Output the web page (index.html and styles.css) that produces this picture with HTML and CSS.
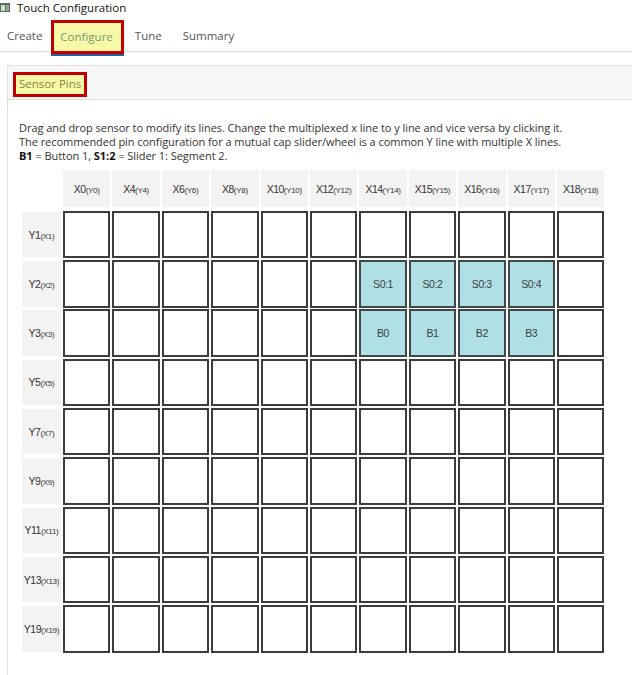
FILE: index.html
```html
<!DOCTYPE html>
<html>
<head>
<meta charset="utf-8">
<link rel="stylesheet" href="styles.css">
</head>
<body>
<div class="titlebar">
  <svg class="appicon" width="11" height="11" viewBox="0 0 11 11"><rect x="0" y="1" width="10" height="9" fill="#5a6b5f"/><rect x="1" y="3" width="4" height="6" fill="#cfe3d4"/><rect x="6" y="3" width="3" height="6" fill="#8fa596"/></svg>
  <span class="title">Touch Configuration</span>
</div>
<div class="tabs">
  <span class="tab">Create</span>
  <span class="tab active"><span class="hl">Configure</span></span>
  <span class="tab">Tune</span>
  <span class="tab">Summary</span>
</div>
<div class="panel">
  <div class="panel-head"><span class="hl-box">Sensor Pins</span></div>
  <div class="panel-body">
    <p class="desc">Drag and drop sensor to modify its lines. Change the multiplexed x line to y line and vice versa by clicking it.<br>The recommended pin configuration for a mutual cap slider/wheel is a common Y line with multiple X lines.<br><b>B1</b> = Button 1, <b>S1:2</b> = Slider 1: Segment 2.</p>
    <div class="grid">
      <div class="corner"></div>
      <div class="colh">X0<small>(Y0)</small></div>
      <div class="colh">X4<small>(Y4)</small></div>
      <div class="colh">X6<small>(Y6)</small></div>
      <div class="colh">X8<small>(Y8)</small></div>
      <div class="colh">X10<small>(Y10)</small></div>
      <div class="colh">X12<small>(Y12)</small></div>
      <div class="colh">X14<small>(Y14)</small></div>
      <div class="colh">X15<small>(Y15)</small></div>
      <div class="colh">X16<small>(Y16)</small></div>
      <div class="colh">X17<small>(Y17)</small></div>
      <div class="colh">X18<small>(Y18)</small></div>

      <div class="rowh">Y1<small>(X1)</small></div>
      <div class="cell"></div><div class="cell"></div><div class="cell"></div><div class="cell"></div><div class="cell"></div><div class="cell"></div><div class="cell"></div><div class="cell"></div><div class="cell"></div><div class="cell"></div><div class="cell"></div>

      <div class="rowh">Y2<small>(X2)</small></div>
      <div class="cell"></div><div class="cell"></div><div class="cell"></div><div class="cell"></div><div class="cell"></div><div class="cell"></div><div class="cell on">S0:1</div><div class="cell on">S0:2</div><div class="cell on">S0:3</div><div class="cell on">S0:4</div><div class="cell"></div>

      <div class="rowh">Y3<small>(X3)</small></div>
      <div class="cell"></div><div class="cell"></div><div class="cell"></div><div class="cell"></div><div class="cell"></div><div class="cell"></div><div class="cell on">B0</div><div class="cell on">B1</div><div class="cell on">B2</div><div class="cell on">B3</div><div class="cell"></div>

      <div class="rowh">Y5<small>(X5)</small></div>
      <div class="cell"></div><div class="cell"></div><div class="cell"></div><div class="cell"></div><div class="cell"></div><div class="cell"></div><div class="cell"></div><div class="cell"></div><div class="cell"></div><div class="cell"></div><div class="cell"></div>

      <div class="rowh">Y7<small>(X7)</small></div>
      <div class="cell"></div><div class="cell"></div><div class="cell"></div><div class="cell"></div><div class="cell"></div><div class="cell"></div><div class="cell"></div><div class="cell"></div><div class="cell"></div><div class="cell"></div><div class="cell"></div>

      <div class="rowh">Y9<small>(X9)</small></div>
      <div class="cell"></div><div class="cell"></div><div class="cell"></div><div class="cell"></div><div class="cell"></div><div class="cell"></div><div class="cell"></div><div class="cell"></div><div class="cell"></div><div class="cell"></div><div class="cell"></div>

      <div class="rowh">Y11<small>(X11)</small></div>
      <div class="cell"></div><div class="cell"></div><div class="cell"></div><div class="cell"></div><div class="cell"></div><div class="cell"></div><div class="cell"></div><div class="cell"></div><div class="cell"></div><div class="cell"></div><div class="cell"></div>

      <div class="rowh">Y13<small>(X13)</small></div>
      <div class="cell"></div><div class="cell"></div><div class="cell"></div><div class="cell"></div><div class="cell"></div><div class="cell"></div><div class="cell"></div><div class="cell"></div><div class="cell"></div><div class="cell"></div><div class="cell"></div>

      <div class="rowh">Y19<small>(X19)</small></div>
      <div class="cell"></div><div class="cell"></div><div class="cell"></div><div class="cell"></div><div class="cell"></div><div class="cell"></div><div class="cell"></div><div class="cell"></div><div class="cell"></div><div class="cell"></div><div class="cell"></div>
    </div>
  </div>
</div>
</body>
</html>
```
FILE: styles.css
```css
html, body {
  margin: 0;
  padding: 0;
  overflow: hidden;
  background: #fff;
}
body {
  font-family: "Open Sans", "Noto Sans", sans-serif;
  color: #222;
  width: 632px;
  height: 675px;
}
.titlebar {
  display: flex;
  align-items: center;
  height: 15px;
  gap: 6px;
}
.title {
  font-size: 11.5px;
  color: #111;
}
.tabs {
  display: flex;
  align-items: stretch;
  height: 37px;
  padding-left: 7px;
  border-bottom: 1px solid #dcdcdc;
  box-sizing: border-box;
}
.tab {
  font-size: 11.5px;
  color: #555;
  display: flex;
  align-items: center;
  padding-top: 4px;
  margin-right: 21px;
}
.tab.active {
  margin-left: -12px;
  margin-right: 11px;
  padding-top: 7px;
}
.hl {
  background: #f8f9a8;
  border: 3px solid #c00000;
  color: #6f9a72;
  padding: 4px 8px 5px 6px;
  height: 19px;
  display: flex;
  align-items: center;
  box-shadow: 0 2px 0 #2a5d9f;
}
.panel {
  margin: 13px 0 0 7px;
  width: 625px;
  height: 640px;
  border: 1px solid #e1e1e1;
  border-right: none;
  box-sizing: border-box;
}
.panel-head {
  background: #f7f7f7;
  height: 34px;
  border-bottom: 1px solid #e1e1e1;
  padding: 5px 0 0 5px;
  box-sizing: border-box;
}
.hl-box {
  display: inline-block;
  background: #f8f9a8;
  border: 3px solid #c00000;
  color: #86883c;
  font-size: 11.5px;
  padding: 1px 3px 3px 3px;
  line-height: 15px;
}
.panel-body {
  padding: 21px 11px 0 11px;
}
.desc {
  margin: 0;
  font-size: 11px;
  line-height: 14px;
  color: #333;
  letter-spacing: -0.05px;
}
.desc b {
  color: #111;
}
.grid {
  margin: 7px 0 0 3px;
  display: grid;
  grid-template-columns: 39px repeat(11, 47.4px);
  grid-template-rows: 39px repeat(9, 47.4px);
  column-gap: 2px;
  row-gap: 1.9px;
  font-family: "Liberation Sans", Arial, sans-serif;
}
.colh {
  background: #f3f3f3;
  height: 37px;
  display: flex;
  align-items: center;
  justify-content: center;
  font-size: 10.5px;
  color: #333;
  letter-spacing: -0.5px;
  white-space: nowrap;
}
.rowh {
  background: #f3f3f3;
  display: flex;
  align-items: center;
  justify-content: center;
  font-size: 10.5px;
  color: #333;
  letter-spacing: -0.5px;
  white-space: nowrap;
  margin: 1px 0;
}
small {
  font-size: 8px;
  letter-spacing: -0.3px;
  padding-top: 3px;
}
.cell {
  border: 2px solid #3c3c3c;
  box-sizing: border-box;
  background: #fff;
  display: flex;
  align-items: center;
  justify-content: center;
  font-size: 10.5px;
  color: #3a3f44;
  letter-spacing: -0.4px;
}
.cell.on {
  background: #b0dfe5;
  border-color: #404849;
}
```
